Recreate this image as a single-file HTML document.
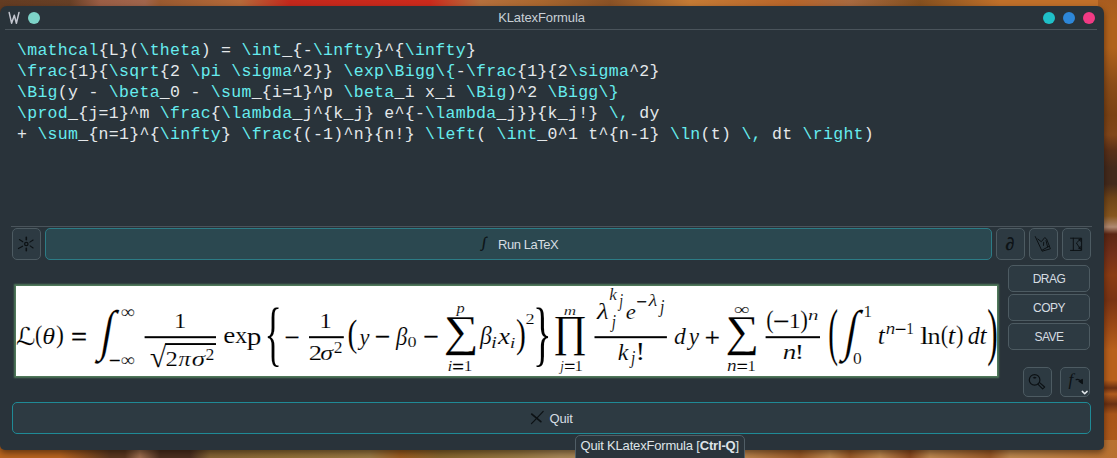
<!DOCTYPE html>
<html><head><meta charset="utf-8"><title>KLatexFormula</title>
<style>
html,body{margin:0;padding:0;}
body{width:1117px;height:458px;overflow:hidden;position:relative;background:#a4602a;font-family:"Liberation Sans",sans-serif;}
.abs{position:absolute;}
#desk-top{left:0;top:0;width:1117px;height:16px;background:linear-gradient(90deg,#643c22 0,#684026 70px,#9b5e45 100px,#a0654c 145px,#9a5a30 160px,#b56a3a 240px,#c4281c 290px,#cc2a1c 430px,#b5703d 480px,#a9672f 540px,#8a5226 610px,#c57b35 690px,#b8652a 790px,#a86a40 850px,#85501f 920px,#c0702a 1000px,#c0702a 1117px);}
#desk-right{left:1098px;top:0;width:19px;height:458px;background:linear-gradient(180deg,#a85c20 0,#b0621c 20px,#b0621c 48px,#8a4c18 85px,#7a4214 115px,#80461a 135px,#5a3018 150px,#442a1c 168px,#442a1c 184px,#6e4418 198px,#86561e 216px,#b08a72 227px,#5c2614 234px,#74301a 255px,#8a3c14 275px,#7a3414 300px,#9a4816 325px,#b8601c 350px,#b8601c 380px,#6a3012 388px,#b05a1c 394px,#6a3012 404px,#a85418 414px,#b05c1c 458px);}
#desk-bot{left:0;top:440px;width:1117px;height:18px;background:linear-gradient(90deg,#b8651f 0,#b8651f 60px,#5a3820 110px,#5a3820 125px,#a07050 140px,#4a3020 160px,#4a3020 190px,#866636 210px,#907038 280px,#9a7a44 370px,#9a5c20 400px,#86662e 440px,#987a44 520px,#a88858 560px,#c08a50 740px,#9a5a28 800px,#c08a50 830px,#9a5a28 850px,#c08a50 880px,#8a4a20 910px,#c08a50 930px,#9a5a28 990px,#c08a50 1010px,#b87030 1117px);}
#win{left:0;top:6px;width:1103.5px;height:444px;background:#29333a;border-radius:7px 7px 5px 5px;box-shadow:0 3px 6px rgba(20,8,0,0.5);}
.sep{height:1px;background:#4a545b;}
.circ{width:12px;height:12px;border-radius:50%;}
#title{left:0;width:1083px;top:10px;text-align:center;font-size:13px;line-height:16px;color:#c8d0d6;letter-spacing:-0.12px;}
#code{left:17px;top:40px;font-family:"Liberation Mono",monospace;font-size:16.5px;letter-spacing:0.3px;line-height:21px;color:#e4e8ea;white-space:pre;}
#code b{font-weight:normal;color:#66ecee;}
.btn{box-sizing:border-box;border:1px solid #4d5b62;border-radius:5px;background:#2d3a42;color:#d8dee2;}
.tbtn{box-sizing:border-box;border:1px solid #2c7c86;border-radius:5px;background:#2b4850;}
.lbl{font-size:12px;line-height:14px;text-align:center;letter-spacing:-0.5px;color:#d6dde2;}
</style></head><body>
<div id="desk-top" class="abs"></div>
<div id="desk-right" class="abs"></div>
<div id="desk-bot" class="abs"></div>
<div id="win" class="abs"></div>

<!-- title bar -->
<svg class="abs" style="left:7px;top:10px" width="14" height="16" viewBox="0 0 14 16"><path d="M2.2 2.6 L4.6 13.2 L7.3 5.2 L9.4 13.2 L12 2.4" fill="none" stroke="#c3c6cf" stroke-width="1.5" stroke-linejoin="round" stroke-linecap="round"/></svg>
<div class="abs circ" style="left:28px;top:12px;background:#7dd3c8"></div>
<div id="title" class="abs">KLatexFormula</div>
<div class="abs circ" style="left:1043px;top:12px;background:#1fc0c8"></div>
<div class="abs circ" style="left:1063px;top:12px;background:#2d87d8"></div>
<div class="abs circ" style="left:1083px;top:12px;background:#f03a84"></div>
<div class="abs sep" style="left:5px;top:29px;width:1092px"></div>

<!-- code editor -->
<div id="code" class="abs"><b>\mathcal</b>{L}(<b>\theta</b>) = <b>\int</b>_{-<b>\infty</b>}^{<b>\infty</b>}
<b>\frac</b>{1}{<b>\sqrt</b>{2 <b>\pi</b> <b>\sigma</b>^2}} <b>\exp\Bigg\{</b>-<b>\frac</b>{1}{2<b>\sigma</b>^2}
<b>\Big</b>(y - <b>\beta</b>_0 - <b>\sum</b>_{i=1}^p <b>\beta</b>_i x_i <b>\Big</b>)^2 <b>\Bigg\}</b>
<b>\prod</b>_{j=1}^m <b>\frac</b>{<b>\lambda</b>_j^{k_j} e^{-<b>\lambda</b>_j}}{k_j!} <b>\,</b> dy
+ <b>\sum</b>_{n=1}^{<b>\infty</b>} <b>\frac</b>{(-1)^n}{n!} <b>\left</b>( <b>\int</b>_0^1 t^{n-1} <b>\ln</b>(t) <b>\,</b> dt <b>\right</b>)</div>

<div class="abs sep" style="left:11px;top:226px;width:1081px"></div>

<!-- toolbar row -->
<div class="abs btn" style="left:12px;top:228px;width:29px;height:32px"></div>
<div class="abs tbtn" style="left:45px;top:228px;width:947px;height:32px"></div>
<div class="abs" style="left:498px;top:237px;font-size:13px;line-height:16px;color:#d6dde2;letter-spacing:-0.45px;white-space:pre">Run LaTeX</div>
<div class="abs btn" style="left:996px;top:228px;width:29px;height:32px"></div>
<div class="abs btn" style="left:1029px;top:228px;width:29px;height:32px"></div>
<div class="abs btn" style="left:1062px;top:228px;width:29px;height:32px"></div>

<!-- side buttons -->
<div class="abs btn" style="left:1008px;top:265px;width:82px;height:27px"></div>
<div class="abs btn" style="left:1008px;top:294px;width:82px;height:27px"></div>
<div class="abs btn" style="left:1008px;top:323px;width:82px;height:27px"></div>
<div class="abs lbl" style="left:1008px;top:272px;width:82px">DRAG</div>
<div class="abs lbl" style="left:1008px;top:301px;width:82px">COPY</div>
<div class="abs lbl" style="left:1008px;top:330px;width:82px">SAVE</div>
<div class="abs btn" style="left:1023px;top:367px;width:29px;height:30px"></div>
<div class="abs btn" style="left:1060px;top:367px;width:30px;height:30px"></div>

<!-- formula preview -->
<div class="abs" id="prev" style="left:16px;top:286px;width:981px;height:90px;background:#fff;box-shadow:0 0 1.5px 1.8px #4f7859;"></div>

<!--FORMULA-->
<svg class="abs" id="fsvg" style="left:16px;top:286px" width="981" height="90" viewBox="0 0 981 90">
<style>#fsvg text{font-family:"Liberation Serif",serif;fill:#000;stroke:#fff;stroke-width:0.14px}#fsvg .o{stroke:#000;stroke-width:0.35px}#fsvg .q{stroke:#000;stroke-width:0.3px}#fsvg .i{font-style:italic}#fsvg .m{font-family:"DejaVu Sans",sans-serif}</style>
<text class="m" font-size="24.47" transform="translate(-0.32 59.23) scale(1.113 1)">ℒ</text>
<text class="r" font-size="25.05" transform="translate(18.92 57.21) scale(0.874 1)">(</text>
<text class="i" font-size="22.82" transform="translate(26.32 58.17) scale(1.145 1)">θ</text>
<text class="r" font-size="25.05" transform="translate(39.88 57.21) scale(0.952 1)">)</text>
<text class="r q" font-size="28.42" x="54.92" y="60.78">=</text>
<text class="r" font-size="41.09" transform="translate(83.33 63.21) skewX(-9.73) scale(1 1.351)">∫</text>
<text class="r" font-size="17.92" transform="translate(104.49 31.80) scale(1.133 1)">∞</text>
<text class="r o" font-size="20.42" x="93.08" y="81.49">−</text>
<text class="r" font-size="17.92" transform="translate(104.49 79.90) scale(1.133 1)">∞</text>
<text class="r" font-size="21.82" transform="translate(158.12 41.80) scale(1.123 1)">1</text>
<text class="r" font-size="29.69" transform="translate(133.69 80.70) scale(1.023 1)">√</text>
<text class="r" font-size="21.21" transform="translate(149.61 80.20) scale(1.164 1)">2</text>
<text class="i" font-size="21.70" transform="translate(162.48 80.08) scale(1.117 1)">π</text>
<text class="i" font-size="20.05" transform="translate(175.71 80.36) scale(1.350 1)">σ</text>
<text class="r" font-size="16.21" transform="translate(189.59 73.50) scale(1.097 1)">2</text>
<text class="r" font-size="23.13" transform="translate(207.35 57.27) scale(1.176 1)">e</text>
<text class="r" font-size="22.39" transform="translate(219.18 57.30) scale(1.059 1)">x</text>
<text class="r" font-size="25.99" transform="translate(230.76 58.74) scale(1.129 1)">p</text>
<text class="r" font-size="71.27" transform="translate(248.46 70.68) scale(0.505 1)">{</text>
<text class="r o" font-size="26.53" x="268.81" y="59.87">−</text>
<text class="r" font-size="21.82" transform="translate(303.62 41.80) scale(1.123 1)">1</text>
<text class="r" font-size="21.82" transform="translate(292.73 73.80) scale(1.222 1)">2</text>
<text class="i" font-size="20.76" transform="translate(304.25 73.99) scale(1.252 1)">σ</text>
<text class="r" font-size="15.76" transform="translate(317.70 67.10) scale(1.113 1)">2</text>
<text class="r" font-size="38.90" transform="translate(331.42 60.24) scale(0.757 1)">(</text>
<text class="i" font-size="24.00" transform="translate(343.51 58.64) scale(0.936 1)">y</text>
<text class="r o" font-size="27.37" x="358.77" y="60.15">−</text>
<text class="i" font-size="24.92" transform="translate(380.05 58.57) scale(0.911 1)">β</text>
<text class="r" font-size="14.52" transform="translate(391.57 61.35) scale(1.249 1)">0</text>
<text class="r o" font-size="27.37" x="407.17" y="60.15">−</text>
<text class="r" font-size="43.91" transform="translate(427.64 60.26) scale(1.114 1)">∑</text>
<text class="i" font-size="15.33" transform="translate(440.58 27.28) scale(1.071 1)">p</text>
<text class="i" font-size="14.74" transform="translate(431.44 85.30) scale(1.183 1)">i</text>
<text class="r q" font-size="20.63" x="436.27" y="87.81">=</text>
<text class="r" font-size="14.55" transform="translate(447.74 85.30) scale(1.181 1)">1</text>
<text class="i" font-size="25.25" transform="translate(464.07 58.30) scale(0.929 1)">β</text>
<text class="i" font-size="15.67" transform="translate(475.12 62.31) scale(1.350 1)">i</text>
<text class="i" font-size="23.48" transform="translate(482.11 58.00) scale(1.151 1)">x</text>
<text class="i" font-size="15.12" transform="translate(493.79 62.13) scale(1.350 1)">i</text>
<text class="r" font-size="40.33" transform="translate(500.01 61.03) scale(0.734 1)">)</text>
<text class="r" font-size="13.94" transform="translate(509.57 38.00) scale(1.311 1)">2</text>
<text class="r" font-size="71.64" transform="translate(517.02 70.93) scale(0.540 1)">}</text>
<text class="r" font-size="44.37" transform="translate(537.02 60.36) scale(0.933 1)">∏</text>
<text class="i" font-size="12.84" transform="translate(547.70 29.00) scale(1.330 1)">m</text>
<text class="i" font-size="14.63" transform="translate(544.22 85.43) scale(0.880 1)">j</text>
<text class="r q" font-size="19.37" x="548.13" y="87.39">=</text>
<text class="r" font-size="14.55" transform="translate(558.49 85.30) scale(1.143 1)">1</text>
<text class="i" font-size="23.38" transform="translate(580.88 33.08) scale(1.160 1)">λ</text>
<text class="i" font-size="15.68" transform="translate(593.27 14.30) scale(1.099 1)">k</text>
<text class="i" font-size="18.40" transform="translate(603.31 20.54) scale(0.744 1)">j</text>
<text class="i" font-size="18.40" transform="translate(595.86 42.44) scale(0.819 1)">j</text>
<text class="i" font-size="21.67" transform="translate(609.82 32.68) scale(1.052 1)">e</text>
<text class="r o" font-size="18.32" x="620.38" y="22.09">−</text>
<text class="i" font-size="16.62" transform="translate(632.41 20.12) scale(1.231 1)">λ</text>
<text class="i" font-size="18.51" transform="translate(643.95 26.61) scale(0.858 1)">j</text>
<text class="i" font-size="23.45" transform="translate(601.80 73.50) scale(1.019 1)">k</text>
<text class="i" font-size="18.51" transform="translate(615.12 77.71) scale(0.843 1)">j</text>
<text class="r" font-size="24.18" transform="translate(619.21 73.64) scale(1.257 1)">!</text>
<text class="i" font-size="24.11" transform="translate(658.09 57.56) scale(0.978 1)">d</text>
<text class="i" font-size="24.30" transform="translate(672.87 58.58) scale(0.955 1)">y</text>
<text class="r q" font-size="26.74" x="688.80" y="60.92">+</text>
<text class="r" font-size="44.02" transform="translate(709.62 60.34) scale(1.070 1)">∑</text>
<text class="r" font-size="16.88" transform="translate(718.22 28.60) scale(1.314 1)">∞</text>
<text class="i" font-size="16.63" transform="translate(711.12 85.20) scale(1.160 1)">n</text>
<text class="r q" font-size="19.37" x="720.73" y="87.39">=</text>
<text class="r" font-size="14.39" transform="translate(731.39 85.20) scale(1.155 1)">1</text>
<text class="r" font-size="24.84" transform="translate(750.31 42.06) scale(0.896 1)">(</text>
<text class="r o" font-size="29.05" x="757.09" y="45.26">−</text>
<text class="r" font-size="21.67" transform="translate(772.76 42.20) scale(1.105 1)">1</text>
<text class="r" font-size="24.84" transform="translate(784.21 42.06) scale(0.929 1)">)</text>
<text class="i" font-size="15.59" transform="translate(791.89 33.70) scale(1.350 1)">n</text>
<text class="i" font-size="21.47" transform="translate(766.65 72.90) scale(1.260 1)">n</text>
<text class="r" font-size="21.85" transform="translate(778.56 72.89) scale(1.350 1)">!</text>
<text class="r" font-size="64.07" transform="translate(812.22 66.73) scale(0.459 1)">(</text>
<text class="r" font-size="41.09" transform="translate(827.16 63.21) skewX(-9.84) scale(1 1.351)">∫</text>
<text class="r" font-size="16.21" transform="translate(847.56 30.80) scale(1.043 1)">1</text>
<text class="r" font-size="15.85" transform="translate(836.99 78.14) scale(1.100 1)">0</text>
<text class="i" font-size="24.52" transform="translate(861.77 57.55) scale(1.051 1)">t</text>
<text class="i" font-size="16.42" transform="translate(869.83 48.20) scale(1.161 1)">n</text>
<text class="r o" font-size="19.79" x="879.11" y="49.88">−</text>
<text class="r" font-size="16.82" transform="translate(890.31 48.40) scale(0.904 1)">1</text>
<text class="r" font-size="24.32" transform="translate(903.88 57.60) scale(1.285 1)">l</text>
<text class="r" font-size="22.32" transform="translate(911.48 57.60) scale(1.176 1)">n</text>
<text class="r" font-size="24.40" transform="translate(924.81 57.25) scale(0.913 1)">(</text>
<text class="i" font-size="25.04" transform="translate(931.71 57.55) scale(1.090 1)">t</text>
<text class="r" font-size="24.40" transform="translate(940.02 57.25) scale(0.930 1)">)</text>
<text class="i" font-size="24.54" transform="translate(951.78 57.75) scale(0.978 1)">d</text>
<text class="i" font-size="25.39" transform="translate(963.57 57.75) scale(1.015 1)">t</text>
<text class="r" font-size="64.40" transform="translate(971.25 66.75) scale(0.490 1)">)</text>
<rect x="128.60" y="50.20" width="71.40" height="2.00"/>
<rect x="149.20" y="57.10" width="50.80" height="1.90"/>
<rect x="293.00" y="50.20" width="34.80" height="2.00"/>
<rect x="578.50" y="50.20" width="72.40" height="2.00"/>
<rect x="749.60" y="50.20" width="54.40" height="2.00"/>
</svg>
<!--/FORMULA-->
<!-- quit -->
<div class="abs tbtn" style="left:12px;top:402px;width:1079px;height:32px;background:#2d3a42;border-color:#1f8a96"></div>
<div class="abs" style="left:549.5px;top:411px;font-size:13px;line-height:16px;color:#d6dde2;letter-spacing:-0.2px">Quit</div>

<!--ICONS-->
<svg class="abs" id="icons" style="left:0;top:0" width="1117" height="458" viewBox="0 0 1117 458" fill="none" stroke="#0c1114" stroke-linecap="round" stroke-linejoin="round">
<!-- settings / sun icon -->
<g stroke-width="1.3">
<circle cx="26.3" cy="244" r="1.7"/>
<path d="M26.3 237.3V239.8M26.3 248.2V250.8" stroke-width="1.6"/>
<path d="M19.4 239.5L22.8 241.8M33.1 240L29.9 242.1M18.4 248.6L22.6 246.2M33.1 248L30.1 245.9" stroke-width="1.1"/>
</g>
<!-- icon 2: sketch -->
<g stroke-width="1">
<path d="M1035.3 236.6L1042.1 251.2L1050.4 248.8L1046.6 239L1044.7 237.6L1041.3 241.7L1037.8 239"/>
<path d="M1042.4 250L1049.2 246.2M1043.7 242.3L1043.5 245.4M1046 240.5L1047.6 247"/>
</g>
<!-- icon 3: box with angle -->
<g stroke-width="1">
<path d="M1070.5 238.2H1081.6V250.4H1070.5M1073.3 238.2V250.4"/>
<path d="M1080.3 239.2L1076.4 243L1080.3 248.8"/>
<path d="M1080.6 238.8L1078.6 239.6L1080.2 241.2ZM1080.6 249.2L1078.4 248.2L1080.2 246.6Z" fill="#0c1114" stroke-width="0.6"/>
</g>
<!-- magnifier -->
<g stroke-width="1.2">
<circle cx="1034.6" cy="379.9" r="5.3"/>
<path d="M1037.9 384.1L1042.6 388.9L1044.6 387L1039.6 382.6"/>
<ellipse cx="1034.6" cy="377.7" rx="1.3" ry="0.6" fill="#0c1114" stroke-width="0.5"/>
</g>
<!-- f arrow -->
<g stroke-width="1.1">
<path d="M1076.2 379.6C1078.6 379 1080.8 380.6 1081.4 382.6" stroke-width="1.3"/>
<path d="M1079 381.2L1082.4 383.6L1082.3 379.4Z" fill="#0c1114"/>
<path d="M1082.3 391.4L1084.7 393.7L1087.1 391.4" stroke="#e3e8ec" stroke-width="1.5"/>
</g>
<!-- quit X -->
<path d="M531.8 414.1L540.8 421.6" stroke-width="1.8"/>
<path d="M543.2 411.4C539 416 535.4 419.6 531.5 423.6" stroke-width="1.2"/>
<g fill="#0c1114" stroke="none" font-family="'Liberation Serif',serif" font-style="italic">
<text transform="translate(481.6 247.4) skewX(-8)" font-size="14.5" stroke="#0c1114" stroke-width="0.3">∫</text>
<text x="1005.4" y="250.2" font-size="17.5" stroke="#0c1114" stroke-width="0.5">∂</text>
<text x="1068.6" y="385.2" font-size="17">f</text>
</g>
</svg>
<!--/ICONS-->
<!-- tooltip -->
<div class="abs" style="left:575px;top:435px;width:170px;height:28px;box-sizing:border-box;border:1px solid #505e66;border-radius:5px;background:#2a343b;"></div>
<div class="abs" id="tip" style="left:580.5px;top:438px;font-size:13px;line-height:16px;color:#dfe4e8;white-space:pre;letter-spacing:-0.18px">Quit KLatexFormula [<b>Ctrl-Q</b>]</div>
</body></html>
